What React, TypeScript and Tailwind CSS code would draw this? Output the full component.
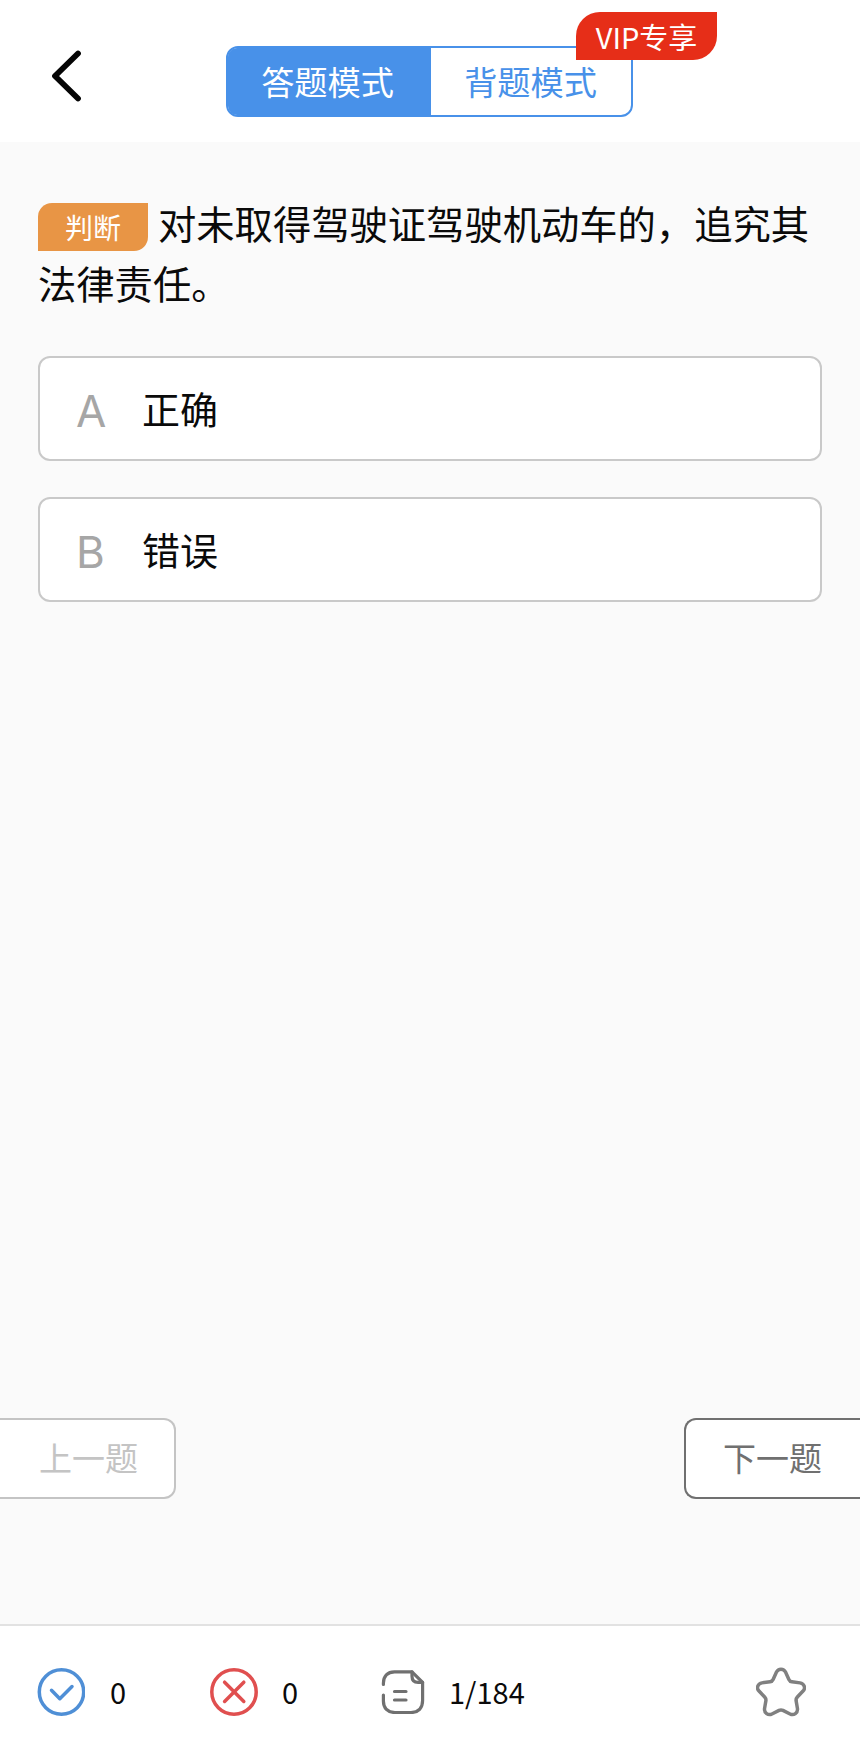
import { ReactNode, useState } from "react";
import clsx from "clsx";

type Option = {
    key: string;
    label: string;
};

const options: Option[] = [
    { key: "A", label: "正确" },
    { key: "B", label: "错误" }
];

function BackIcon() {
    return (
        <svg width="34" height="54" viewBox="0 0 34 54" fill="none" stroke="#050505" strokeWidth="5.8" strokeLinecap="round" strokeLinejoin="round">
            <path d="M29 4.5 6 27l23 22.5" />
        </svg>
    );
}

function CorrectIcon() {
    return (
        <svg width="48" height="48" viewBox="0 0 48 48" fill="none" stroke="#4f8fd6" strokeWidth="3.5" strokeLinecap="round" strokeLinejoin="round">
            <circle cx="24.5" cy="24" r="22.2" />
            <path d="M14.5 22.3l8.3 8.4L35 18.5" />
        </svg>
    );
}

function WrongIcon() {
    return (
        <svg width="48" height="48" viewBox="0 0 48 48" fill="none" stroke="#e04f4f" strokeWidth="3.5" strokeLinecap="round">
            <circle cx="24" cy="24" r="22.2" />
            <path d="M14.6 14.2l19.2 19.2M33.8 14.2L14.6 33.4" />
        </svg>
    );
}

function SheetIcon() {
    return (
        <svg width="44" height="44" viewBox="0 0 44 44" fill="none" stroke="#707070" strokeWidth="3.2" strokeLinecap="round" strokeLinejoin="round">
            <path d="M2.4 14.5v-1.3C2.4 6 6.5 1.8 13.5 1.8H31L41.6 12.4V30.5c0 7.5-4.1 12-11.6 12H14C6.5 42.5 2.4 38 2.4 31V25" />
            <path d="M31 1.8v4.5c0 4 2.1 6.1 6.1 6.1h4.5" />
            <path d="M13.5 21.5h11.5M13.5 30h11.5" />
        </svg>
    );
}

function StarIcon() {
    return (
        <svg width="50" height="50" viewBox="0 0 52 52" fill="none" stroke="#808080" strokeWidth="3.6" strokeLinejoin="round">
            <path d="M21.3 5.2C23.2 1.3 28.8 1.3 30.7 5.2L34.2 13C34.8 14.4 35.9 15.2 37.4 15.4L45.8 16.5C50.2 17.2 51.9 21.8 48.9 25L43 31.2C42 32.3 41.5 33.5 41.7 35L43.1 43.2C43.7 47.7 39.4 50.8 35.4 48.8L28 45.1C26.7 44.5 25.3 44.5 24 45.1L16.6 48.8C12.6 50.8 8.3 47.7 8.9 43.2L10.3 35C10.5 33.5 10 32.3 9 31.2L3.1 25C.1 21.8 1.8 17.2 6.2 16.5L14.6 15.4C16.1 15.2 17.2 14.4 17.8 13Z" />
        </svg>
    );
}

function Stat({ icon, value, className }: { icon: ReactNode; value: string; className?: string }) {
    return (
        <div className={clsx("flex items-center", className)}>
            {icon}
            <span className="pb-[2px] text-[29px] leading-none text-[#0a0a0a]">{value}</span>
        </div>
    );
}

export default function App() {
    const [mode, setMode] = useState<"answer" | "recite">("answer");

    return (
        <div className="flex h-[1749px] w-[860px] flex-col overflow-hidden bg-[#fafafa] font-['Noto_Sans_CJK_SC',sans-serif] text-[#0a0a0a]">
            <header className="flex h-[142px] shrink-0 items-start bg-white pl-[49px]">
                <button className="mt-[49px] w-[34px]">
                    <BackIcon />
                </button>
                <div className="relative mt-[46px] ml-[143px] flex h-[71px] w-[407px] rounded-xl border-2 border-[#4891e9] bg-white text-[33.2px] leading-none">
                    <button
                        className={clsx("w-[203px] rounded-l-[9px] pr-[4px] pb-px", mode === "answer" ? "bg-[#4891e9] text-white" : "text-[#4891e9]")}
                        onClick={() => setMode("answer")}
                    >
                        答题模式
                    </button>
                    <button
                        className={clsx("flex-1 rounded-r-[9px] pr-px pb-px", mode === "recite" ? "bg-[#4891e9] text-white" : "text-[#4891e9]")}
                        onClick={() => setMode("recite")}
                    >
                        背题模式
                    </button>
                    <span className="absolute -top-[36px] left-[348px] flex h-[48px] w-[141px] items-center justify-center rounded-tl-[24px] rounded-br-[24px] bg-[#e62e18] text-[29px] text-white">
                        VIP专享
                    </span>
                </div>
            </header>

            <main className="flex flex-1 flex-col">
                <section className="px-[38px] pt-[51px]">
                    <p className="text-[38.3px] leading-[60px]">
                        <span className="mr-[10px] inline-flex h-[48px] w-[110px] items-center justify-center rounded-tl-[14px] rounded-br-[14px] bg-[#e89545] align-baseline text-[28px] leading-none text-white">
                            判断
                        </span>
                        对未取得驾驶证驾驶机动车的，追究其法律责任。
                    </p>
                    <div className="mt-[43px] flex flex-col gap-[36px]">
                        {options.map((option) => (
                            <button key={option.key} className="flex h-[105px] items-center rounded-xl border-2 border-[#c9c9c9] bg-white pl-[36px] text-left">
                                <span className="w-[66px] pt-[4px] font-[Inter] text-[44px] leading-none text-[#a6a6a6]">{option.key}</span>
                                <span className="pb-[2px] text-[38px] leading-none">{option.label}</span>
                            </button>
                        ))}
                    </div>
                </section>

                <nav className="mt-auto mb-[125px] flex justify-between text-[33px] leading-none">
                    <button className="h-[81px] w-[176px] rounded-r-xl border-2 border-l-0 border-[#c4c4c4] bg-white pb-[2px] pl-[3px] text-[#c4c4c4]">上一题</button>
                    <button className="h-[81px] w-[176px] rounded-l-xl border-2 border-r-0 border-[#707070] bg-white pr-px pb-[2px] text-[#707070]">下一题</button>
                </nav>
            </main>

            <footer className="flex h-[125px] shrink-0 items-center border-t-2 border-[#e2e2e2] bg-white pt-[9px] pr-[54px] pl-[37px]">
                <Stat icon={<CorrectIcon />} value="0" className="w-[173px] gap-[25px]" />
                <Stat icon={<WrongIcon />} value="0" className="w-[171px] gap-[24px]" />
                <Stat icon={<SheetIcon />} value="1/184" className="gap-[24px]" />
                <button className="ml-auto">
                    <StarIcon />
                </button>
            </footer>
        </div>
    );
}
